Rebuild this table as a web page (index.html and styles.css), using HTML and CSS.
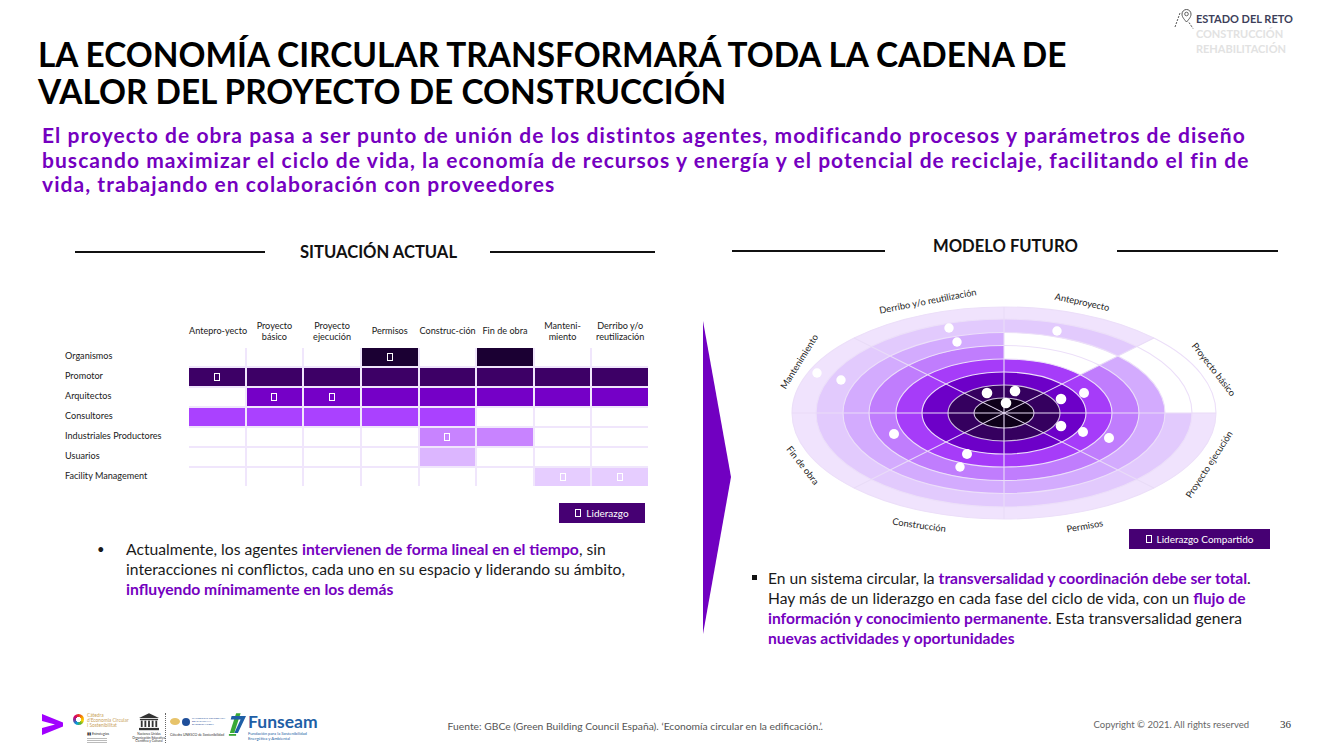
FILE: index.html
```html
<!DOCTYPE html>
<html lang="es">
<head>
<meta charset="utf-8">
<title>La economía circular transformará toda la cadena de valor</title>
<link rel="stylesheet" href="styles.css">
</head>
<body>
<div class="page">
  <header class="header">
    <h1 class="title">LA ECONOMÍA CIRCULAR TRANSFORMARÁ TODA LA CADENA DE<br>VALOR DEL PROYECTO DE CONSTRUCCIÓN</h1>
    <div class="tag">
      <svg class="tag-icon" viewBox="0 0 21 21" aria-hidden="true">
        <path d="M1 19 L6 5" stroke="#555" stroke-width="1" stroke-dasharray="2 1.2" fill="none"/>
        <path d="M12.5 14 C9 10 8 8.5 8 6 A4.5 4.5 0 0 1 17 6 C17 8.5 16 10 12.5 14 Z" stroke="#555" stroke-width="1" fill="none"/>
        <circle cx="12.5" cy="6" r="1.8" stroke="#555" stroke-width="0.9" fill="none"/>
        <path d="M15 14.5 L19 20.5" stroke="#555" stroke-width="1" stroke-dasharray="2 1.2" fill="none"/>
      </svg>
      <div class="tag-text">
        <div class="tag-active">ESTADO DEL RETO</div>
        <div class="tag-dim">CONSTRUCCIÓN</div>
        <div class="tag-dim">REHABILITACIÓN</div>
      </div>
    </div>
  </header>

  <p class="lead">El proyecto de obra pasa a ser punto de unión de los distintos agentes, modificando procesos y parámetros de diseño<br>buscando maximizar el ciclo de vida, la economía de recursos y energía y el potencial de reciclaje, facilitando el fin de<br>vida, trabajando en colaboración con proveedores</p>

  <main class="content">
    <section class="panel panel-left">
      <div class="sec-head head-left">
        <span class="rule rule-l1"></span>
        <h2 class="sec-title">SITUACIÓN ACTUAL</h2>
        <span class="rule rule-l2"></span>
      </div>

      <div class="matrix">
        <div class="mhead">
          <span></span>
          <span>Antepro-yecto</span>
          <span>Proyecto<br>básico</span>
          <span>Proyecto<br>ejecución</span>
          <span>Permisos</span>
          <span>Construc-ción</span>
          <span>Fin de obra</span>
          <span>Manteni-<br>miento</span>
          <span>Derribo y/o<br>reutilización</span>
        </div>
        <div class="mbody">
          <div class="labels">
            <span>Organismos</span>
            <span>Promotor</span>
            <span>Arquitectos</span>
            <span>Consultores</span>
            <span>Industriales Productores</span>
            <span>Usuarios</span>
            <span>Facility Management</span>
          </div>
          <div class="cells">
            <!-- Organismos -->
            <span class="c"></span><span class="c"></span><span class="c"></span><span class="c k1"><i class="box"></i></span><span class="c"></span><span class="c k1"></span><span class="c"></span><span class="c"></span>
            <!-- Promotor -->
            <span class="c k2"><i class="box"></i></span><span class="c k2"></span><span class="c k2"></span><span class="c k2"></span><span class="c k2"></span><span class="c k2"></span><span class="c k2"></span><span class="c k2"></span>
            <!-- Arquitectos -->
            <span class="c"></span><span class="c k3"><i class="box"></i></span><span class="c k3"><i class="box"></i></span><span class="c k3"></span><span class="c k3"></span><span class="c k3"></span><span class="c k3"></span><span class="c k3"></span>
            <!-- Consultores -->
            <span class="c k4"></span><span class="c k4"></span><span class="c k4"></span><span class="c k4"></span><span class="c k4"></span><span class="c"></span><span class="c"></span><span class="c"></span>
            <!-- Industriales -->
            <span class="c"></span><span class="c"></span><span class="c"></span><span class="c"></span><span class="c k5"><i class="box"></i></span><span class="c k5"></span><span class="c"></span><span class="c"></span>
            <!-- Usuarios -->
            <span class="c"></span><span class="c"></span><span class="c"></span><span class="c"></span><span class="c k6"></span><span class="c"></span><span class="c"></span><span class="c"></span>
            <!-- Facility -->
            <span class="c"></span><span class="c"></span><span class="c"></span><span class="c"></span><span class="c"></span><span class="c"></span><span class="c k7"><i class="box"></i></span><span class="c k7"><i class="box"></i></span>
          </div>
        </div>
      </div>

      <div class="legend-row legend-row-left">
        <span class="legend"><i class="box"></i>Liderazgo</span>
      </div>

      <div class="bullet bullet-left">
        <span class="dot">•</span>
        <p>Actualmente, los agentes <b>intervienen de forma lineal en el tiempo</b>, sin<br>interacciones ni conflictos, cada uno en su espacio y liderando su ámbito,<br><b>influyendo mínimamente en los demás</b></p>
      </div>
    </section>

    <div class="arrow-col">
      <svg class="arrow" viewBox="0 0 28 313" aria-hidden="true"><polygon points="0,0 28,156 0,313" fill="#7100c1"/></svg>
    </div>

    <section class="panel panel-right">
      <div class="sec-head head-right">
        <span class="rule rule-r1"></span>
        <h2 class="sec-title">MODELO FUTURO</h2>
        <span class="rule rule-r2"></span>
      </div>

      <svg class="diagram" viewBox="0 0 548 261" aria-label="Modelo circular">
        <g>
          <ellipse cx="272" cy="145" rx="212" ry="106" fill="#f0e3fd"/>
          <ellipse cx="272" cy="145" rx="188" ry="94" fill="#e2cafd"/>
          <ellipse cx="272" cy="145" rx="161" ry="80.5" fill="#d3abfe"/>
          <ellipse cx="272" cy="145" rx="135" ry="67.5" fill="#c07dfd"/>
          <ellipse cx="272" cy="145" rx="108" ry="54" fill="#a63cf9"/>
          <ellipse cx="272" cy="145" rx="82" ry="41" fill="#6d00c8"/>
          <ellipse cx="272" cy="145" rx="56" ry="28" fill="#35005f"/>
          <ellipse cx="272" cy="145" rx="30" ry="15" fill="#0e0019"/>
        </g>
        <path d="M385.84,88.08 A161,80.5 0 0 0 272,64.5 L272,91 A108,54 0 0 1 348.37,106.82 Z" fill="#ffffff"/>
        <path d="M484,145 A212,106 0 0 0 421.9,70.05 L385.84,88.08 A161,80.5 0 0 1 433,145 Z" fill="#ffffff"/>
        <g fill="none" stroke="#ecdff9" stroke-width="1.1">
          <ellipse cx="272" cy="145" rx="212" ry="106"/>
          <ellipse cx="272" cy="145" rx="188" ry="94"/>
          <ellipse cx="272" cy="145" rx="161" ry="80.5"/>
          <ellipse cx="272" cy="145" rx="135" ry="67.5"/>
          <ellipse cx="272" cy="145" rx="108" ry="54"/>
          <ellipse cx="272" cy="145" rx="82" ry="41"/>
          <ellipse cx="272" cy="145" rx="56" ry="28" stroke="#cdbedc"/>
          <ellipse cx="272" cy="145" rx="30" ry="15" stroke="#cdbedc"/>
        </g>
        <g stroke="#e9dcf7" stroke-width="1.1">
          <line x1="60" y1="145" x2="484" y2="145"/>
          <line x1="272" y1="39" x2="272" y2="251"/>
          <line x1="122.1" y1="219.95" x2="421.9" y2="70.05"/>
          <line x1="122.1" y1="70.05" x2="421.9" y2="219.95"/>
        </g>
        <g fill="#ffffff">
          <circle cx="217" cy="60" r="4.7"/>
          <circle cx="225" cy="74" r="4.7"/>
          <circle cx="85" cy="105" r="4.7"/>
          <circle cx="109" cy="112" r="4.7"/>
          <circle cx="255" cy="125" r="5.3"/>
          <circle cx="283" cy="123" r="5.3"/>
          <circle cx="274" cy="135" r="5.3"/>
          <circle cx="162" cy="166" r="5"/>
          <circle cx="235" cy="186" r="5"/>
          <circle cx="228" cy="199" r="4.7"/>
          <circle cx="325" cy="63" r="4.7"/>
          <circle cx="329" cy="131" r="5.3"/>
          <circle cx="352" cy="125" r="5"/>
          <circle cx="329" cy="158" r="5.3"/>
          <circle cx="351" cy="164" r="5"/>
          <circle cx="377" cy="170" r="5"/>
        </g>
        <g class="dlabel" text-anchor="middle" dominant-baseline="middle">
          <text x="196" y="34" transform="rotate(-11 196 34)">Derribo y/o reutilización</text>
          <text x="350" y="35" transform="rotate(12 350 35)">Anteproyecto</text>
          <text x="481" y="102" transform="rotate(52 481 102)">Proyecto básico</text>
          <text x="478" y="197" transform="rotate(-57 478 197)">Proyecto ejecución</text>
          <text x="353" y="259" transform="rotate(-10 353 259)">Permisos</text>
          <text x="187" y="258" transform="rotate(8 187 258)">Construcción</text>
          <text x="70" y="198" transform="rotate(52 70 198)">Fin de obra</text>
          <text x="68" y="94" transform="rotate(-58 68 94)">Mantenimiento</text>
        </g>
      </svg>

      <div class="legend-row legend-row-right">
        <span class="legend legend-wide"><i class="box"></i>Liderazgo Compartido</span>
      </div>

      <div class="bullet bullet-right">
        <span class="sq"></span>
        <p>En un sistema circular, la <b>transversalidad y coordinación debe ser total</b>.<br>Hay más de un liderazgo en cada fase del ciclo de vida, con un <b>flujo de</b><br><b>información y conocimiento permanente</b>. Esta transversalidad genera<br><b>nuevas actividades y oportunidades</b></p>
      </div>
    </section>
  </main>

  <footer class="footer">
    <svg class="acc-logo" viewBox="0 0 21 21" aria-label="accenture"><polygon points="0,0 21,8.5 21,12.5 0,21 0,14 13,10.5 0,7" fill="#a100ff"/></svg>

    <div class="logo-catedra">
      <div class="cat-top">
        <span class="cat-ring"></span>
        <span class="cat-name">Càtedra<br>d'Economia Circular<br>i Sostenibilitat</span>
      </div>
      <span class="cat-sub">▮▮ Estrategias</span>
      <span class="tiny-lines"></span>
    </div>

    <div class="logo-unesco">
      <svg class="temple" viewBox="0 0 22 19" aria-label="UNESCO">
        <polygon points="11,0 22,5 0,5" fill="#333"/>
        <rect x="1" y="6" width="20" height="1.5" fill="#333"/>
        <rect x="2" y="8" width="2" height="7" fill="#333"/>
        <rect x="6" y="8" width="2" height="7" fill="#333"/>
        <rect x="10" y="8" width="2" height="7" fill="#333"/>
        <rect x="14" y="8" width="2" height="7" fill="#333"/>
        <rect x="18" y="8" width="2" height="7" fill="#333"/>
        <rect x="0" y="16" width="22" height="2.5" fill="#333"/>
      </svg>
      <span class="unesco-txt">Naciones Unidas<br>Organización Educativa,<br>Científica y Cultural</span>
    </div>

    <span class="dotline"></span>

    <div class="logo-cu">
      <div class="cu-top">
        <span class="cu-a"></span><span class="cu-b"></span><span class="cu-c">UNIVERSITAT POLITÈCNICA<br>DE CATALUNYA<br>BARCELONATECH</span>
      </div>
      <span class="cu-txt">Cátedra UNESCO de Sostenibilidad</span>
    </div>

    <div class="logo-funseam">
      <svg class="fun-icon" viewBox="0 0 20 26" aria-hidden="true">
        <polygon points="9,0 14,0 7,22 2,22" fill="#3aa935"/>
        <polygon points="4,3 20,3 11,22 7,22 14,7 3,7" fill="#1f5fa6"/>
        <rect x="1" y="23" width="8" height="2" fill="#3aa935"/>
      </svg>
      <div class="fun-text">
        <span class="fun-name">Funseam</span>
        <span class="fun-sub">Fundación para la Sostenibilidad<br>Energética y Ambiental</span>
      </div>
    </div>

    <span class="source">Fuente: GBCe (Green Building Council España). ‘Economía circular en la edificación.’.</span>
    <span class="copy">Copyright © 2021. All rights reserved</span>
    <span class="pnum">36</span>
  </footer>
</div>
</body>
</html>
```

FILE: styles.css
```css
* {
  box-sizing: border-box;
  margin: 0;
  padding: 0;
}

body {
  margin: 0;
  background: #ffffff;
  font-family: Lato, "Noto Sans", "Liberation Sans", sans-serif;
  color: #1a1a1a;
}

.page {
  width: 1333px;
  height: 750px;
  display: flex;
  flex-direction: column;
  overflow: hidden;
  background: #ffffff;
}

/* ---------- header ---------- */
.header {
  display: flex;
  justify-content: space-between;
  align-items: flex-start;
}

.title {
  margin: 36px 0 0 38px;
  font-size: 33.4px;
  line-height: 37px;
  font-weight: 700;
  color: #000000;
  white-space: nowrap;
}

.tag {
  display: flex;
  align-items: flex-start;
  margin: 8px 40px 0 0;
}

.tag-icon {
  width: 21px;
  height: 21px;
  display: block;
  margin-right: 1px;
}

.tag-text {
  padding-top: 3px;
  font-size: 11px;
  line-height: 15px;
  font-weight: 700;
}

.tag-active {
  color: #3d3f5a;
}

.tag-dim {
  color: #e2e2e2;
}

.lead {
  margin: 13px 0 0 42px;
  font-size: 21px;
  line-height: 24.5px;
  letter-spacing: 1.05px;
  font-weight: 700;
  color: #7500c0;
  white-space: nowrap;
}

/* ---------- content ---------- */
.content {
  display: flex;
  align-items: flex-start;
  margin-top: 39px;
}

.panel-left {
  margin-left: 60px;
  width: 600px;
}

.panel-right {
  margin-left: 1px;
  width: 548px;
}

.sec-head {
  display: flex;
  align-items: center;
}

.head-left {
  height: 32px;
  margin-left: 15px;
}

.head-right {
  height: 20px;
}

.rule {
  display: block;
  height: 2px;
  background: #111111;
}

.rule-l1 { width: 190px; }
.rule-l2 { width: 165px; }
.rule-r1 { width: 153px; margin-top: 10px; }
.rule-r2 { width: 161px; margin-top: 10px; }

.sec-title {
  font-size: 16.6px;
  line-height: 20px;
  font-weight: 700;
  color: #111111;
  white-space: nowrap;
}

.head-left .sec-title { margin: 0 33px 0 35px; }
.head-right .sec-title { margin: 0 39px 0 48px; }

/* ---------- matrix ---------- */
.matrix {
  margin: 52px 0 0 5px;
  font-size: 9.1px;
  color: #1a1a1a;
}

.mhead {
  display: grid;
  grid-template-columns: 122px repeat(8, 55.625px);
  column-gap: 2px;
  height: 28px;
  padding-bottom: 8px;
  align-items: center;
}

.mhead span {
  text-align: center;
  line-height: 11px;
  white-space: nowrap;
}

.mbody {
  display: flex;
}

.labels {
  width: 124px;
  display: grid;
  grid-template-rows: repeat(7, 18px);
  row-gap: 2px;
}

.labels span {
  line-height: 15px;
  white-space: nowrap;
}

.cells {
  width: 459px;
  display: grid;
  grid-template-columns: repeat(8, 55.625px);
  grid-template-rows: repeat(7, 18px);
  gap: 2px;
  background: #f0e6fc;
}

.c {
  background: #ffffff;
  display: flex;
  align-items: center;
  justify-content: center;
}

.k1 { background: #1b0033; }
.k2 { background: #3d0066; }
.k3 { background: #7500c7; }
.k4 { background: #aa41ff; }
.k5 { background: #c883ff; }
.k6 { background: #dcb6ff; }
.k7 { background: #e6cdff; }

.box {
  display: inline-block;
  width: 6px;
  height: 8px;
  border: 1px solid #ffffff;
}

/* ---------- legends ---------- */
.legend-row {
  display: flex;
  justify-content: flex-end;
}

.legend-row-left {
  margin-top: 17px;
  width: 585px;
}

.legend-row-right {
  width: 538px;
}

.legend {
  display: flex;
  align-items: center;
  justify-content: center;
  gap: 5px;
  height: 20px;
  width: 86px;
  background: #460073;
  color: #ffffff;
  font-size: 10px;
  white-space: nowrap;
}

.legend-wide {
  width: 141px;
}

/* ---------- bullets ---------- */
.bullet {
  display: flex;
  align-items: flex-start;
  color: #1a1a1a;
  white-space: nowrap;
}

.bullet b {
  color: #7500c0;
  font-weight: 700;
}

.bullet-left {
  margin: 16px 0 0 37px;
  font-size: 15.7px;
  line-height: 20px;
}

.bullet-left .dot {
  width: 29px;
  font-size: 13px;
}

.bullet-right {
  margin: 19px 0 0 20px;
  font-size: 15.6px;
  line-height: 20px;
}

.sq {
  width: 5px;
  height: 5px;
  margin: 7px 11px 0 0;
  background: #111111;
  flex: none;
}

/* ---------- arrow ---------- */
.arrow-col {
  margin-left: 43px;
  width: 28px;
  padding-top: 85px;
}

.arrow {
  display: block;
  width: 28px;
  height: 313px;
}

/* ---------- diagram ---------- */
.diagram {
  display: block;
  width: 548px;
  height: 261px;
  margin-top: 12px;
  overflow: visible;
}

.dlabel {
  font-family: Lato, "Noto Sans", sans-serif;
  font-size: 9.3px;
  fill: #222222;
}

/* ---------- footer ---------- */
.footer {
  margin-top: auto;
  height: 45px;
  display: flex;
  align-items: flex-start;
  padding-top: 8px;
}

.acc-logo {
  display: block;
  width: 21px;
  height: 21px;
  margin: 1px 0 0 42px;
}

.logo-catedra {
  width: 58px;
  margin-left: 10px;
  display: flex;
  flex-direction: column;
}

.cat-top {
  display: flex;
  align-items: flex-start;
}

.cat-ring {
  width: 11px;
  height: 11px;
  border-radius: 50%;
  margin-top: 1px;
  flex: none;
  background:
    radial-gradient(circle, #ffffff 0 32%, transparent 36%),
    conic-gradient(#e4322b, #f39200, #ffd500, #5bb432, #00a0e3, #6b3fa0, #d6006e, #e4322b);
}

.cat-name {
  margin-left: 3px;
  font-size: 4.8px;
  line-height: 5px;
  color: #c9a25a;
  white-space: nowrap;
}

.cat-sub {
  margin: 3px 0 0 14px;
  font-size: 3.6px;
  color: #333;
  white-space: nowrap;
}

.tiny-lines {
  margin: 2px 0 0 14px;
  width: 20px;
  height: 6px;
  background: repeating-linear-gradient(#bbb 0 1px, transparent 1px 2px);
}

.logo-unesco {
  width: 28px;
  margin-left: 4px;
  display: flex;
  flex-direction: column;
  align-items: center;
}

.temple {
  display: block;
  width: 20px;
  height: 18px;
}

.unesco-txt {
  margin-top: 2px;
  font-size: 3.2px;
  line-height: 3.6px;
  text-align: center;
  color: #333;
  white-space: nowrap;
}

.dotline {
  width: 0;
  height: 30px;
  border-left: 1px dotted #666;
  margin-left: 2px;
}

.logo-cu {
  width: 56px;
  margin-left: 4px;
  padding-top: 4px;
  display: flex;
  flex-direction: column;
}

.cu-top {
  display: flex;
  align-items: center;
  gap: 2px;
}

.cu-a {
  width: 10px;
  height: 7px;
  border-radius: 50%;
  background: #e7c36a;
}

.cu-b {
  width: 8px;
  height: 8px;
  border-radius: 50%;
  background: #1f4f9a;
}

.cu-c {
  font-size: 2.6px;
  line-height: 3px;
  color: #1f4f9a;
  white-space: nowrap;
}

.cu-txt {
  margin-top: 7px;
  font-size: 3.5px;
  color: #333;
  white-space: nowrap;
}

.logo-funseam {
  display: flex;
  align-items: flex-start;
  margin-left: 2px;
}

.fun-icon {
  display: block;
  width: 18px;
  height: 24px;
}

.fun-text {
  display: flex;
  flex-direction: column;
  margin-left: 2px;
}

.fun-name {
  font-size: 17.5px;
  line-height: 18px;
  font-weight: 700;
  color: #1f5fa6;
}

.fun-sub {
  font-size: 4.2px;
  line-height: 5px;
  color: #1f5fa6;
  white-space: nowrap;
}

.source {
  margin: 7px 0 0 130px;
  font-size: 10.3px;
  color: #555555;
  white-space: nowrap;
}

.copy {
  margin: 6px 0 0 auto;
  font-size: 9.5px;
  color: #666666;
  white-space: nowrap;
}

.pnum {
  margin: 5px 42px 0 31px;
  font-family: "Liberation Serif", serif;
  font-size: 11px;
  color: #333333;
}
```
